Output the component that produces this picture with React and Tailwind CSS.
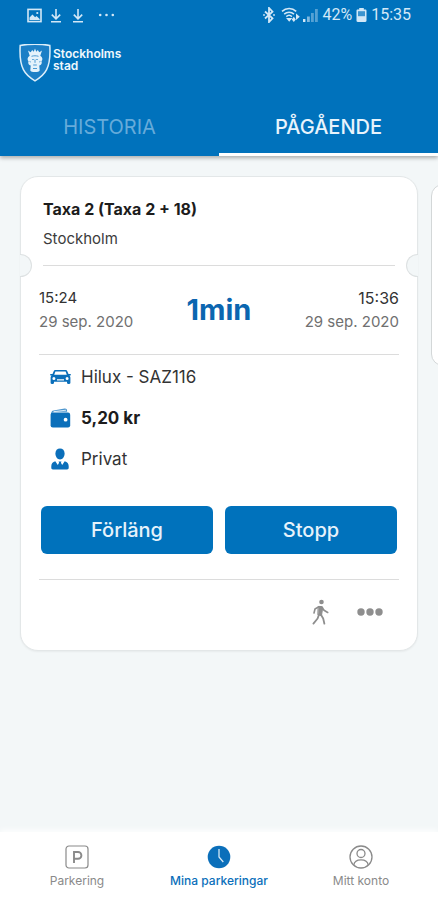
import { useState } from "react";
import clsx from "clsx";

const StatusBar = () => (
    <div className="flex h-[30px] items-center justify-between px-[27px] text-[#d3e8f7]">
        <div className="flex items-center">
            <svg className="h-[15px] w-[15px]" viewBox="0 0 15 15" fill="none" stroke="currentColor" strokeWidth="1.6">
                <rect x="1" y="1.4" width="13" height="12.2" />
                <path d="M2.5 12V9.5l3-3 2.6 2.7 1.4-1.2 3.2 3v1z" fill="currentColor" stroke="none" />
                <circle cx="10.3" cy="5" r="1.1" fill="currentColor" stroke="none" />
            </svg>
            <DownloadArrow className="ml-2" />
            <DownloadArrow className="ml-2.5" />
            <svg className="ml-3.5 h-3 w-[17px]" viewBox="0 0 17 12" fill="currentColor">
                <circle cx="2.2" cy="6" r="1.3" />
                <circle cx="8.5" cy="6" r="1.3" />
                <circle cx="14.8" cy="6" r="1.3" />
            </svg>
        </div>
        <div className="flex items-center font-['Roboto',sans-serif] text-base leading-5">
            <svg className="h-4 w-3" viewBox="0 0 12 16" fill="none" stroke="currentColor" strokeWidth="1.8">
                <path d="M2 4.5l7.5 6.8L6 15V1l3.5 3.7L2 11.500" />
                <circle cx="1" cy="8" r=".9" fill="currentColor" stroke="none" />
                <circle cx="11" cy="8" r=".9" fill="currentColor" stroke="none" />
            </svg>
            <svg className="ml-1.5 h-4 w-5" viewBox="0 0 20 16" fill="none" stroke="currentColor" strokeWidth="1.5">
                <path d="M1 4.4C5 .6 11.2.6 15.2 4.4M3.2 7.1c2.8-2.6 7-2.6 9.8 0M5.3 9.6c1.6-1.5 4-1.5 5.6 0" />
                <path d="M6.7 11.7l1.5 1.8 1.5-1.8z" fill="currentColor" />
                <path d="M10.800 12.500l2-2.800 2 2.800-2 2.500zM15 6.500l3.800 3.200L15 13z" fill="currentColor" stroke="none" />
            </svg>
            <svg className="ml-0.5 h-4 w-[15px]" viewBox="0 0 15 16" fill="currentColor">
                <rect x="0" y="12" width="2.4" height="3" />
                <rect x="4" y="9.5" width="2.8" height="5.5" opacity=".6" />
                <rect x="8" y="6" width="2.8" height="9" opacity=".4" />
                <rect x="12" y="2" width="2.8" height="13" opacity=".4" />
            </svg>
            <span className="ml-1">42%</span>
            <svg className="ml-1 h-4 w-[11px]" viewBox="0 0 11 16" fill="currentColor">
                <path d="M3.2 1h4.6v1.6h1.5c.7 0 1.2.5 1.2 1.2v10c0 .7-.5 1.2-1.2 1.2H1.7c-.7 0-1.2-.5-1.2-1.2v-10c0-.7.5-1.2 1.2-1.2h1.5z" />
                <rect x="2" y="4.2" width="7" height="5" fill="#3c94cf" />
            </svg>
            <span className="ml-1">15:35</span>
        </div>
    </div>
);

const DownloadArrow = ({ className }) => (
    <svg className={clsx("h-[15px] w-3", className)} viewBox="0 0 12 15" fill="none" stroke="currentColor" strokeWidth="1.6">
        <path d="M6 1v9.6M1.8 6.6L6 10.8l4.2-4.2M1 13.8h10" />
    </svg>
);

const Shield = () => (
    <svg className="h-[38px] w-8" viewBox="0 0 32 38">
        <path
            d="M1.2 1.4c9.5-1.6 20-1.6 29.6 0 .6 9.6-.2 18.3-3.2 24.3C25.1 30.6 21 34 16 36.8 11 34 6.9 30.6 4.4 25.7 1.4 19.7.6 11 1.2 1.4z"
            fill="#1c7fc6"
            stroke="#dceefa"
            strokeWidth="1.5"
        />
        <path
            d="M9 6.5l2.7 1.8 1.5-2.300 1.5 1.7L16 4.6l1.3 3.1L18.8 6l1.5 2.3L23 6.5l-1.7 5.2c2.4 1.2 2.7 4 1.2 5.5.8 2-.2 4-2.2 4.3l.4 5c-.5 1.5-2.3 1.5-4.7 1.5s-4.2 0-4.7-1.5l.4-5c-2-.3-3-2.3-2.2-4.3-1.5-1.500-1.2-4.3 1.2-5.5z"
            fill="#e4f2fb"
        />
        <path
            d="M12.5 12.3c2.3-.7 4.7-.7 7 0M13.2 15.5h1.6M17.2 15.5h1.6M16 15.5v3.300M14.2 21h3.600M10.6 17.5l1.2.5M21.4 17.5l-1.2.5M14 24.5h4"
            fill="none"
            stroke="#4b9ad3"
            strokeWidth="1"
        />
    </svg>
);

const CarIcon = () => (
    <svg className="h-4 w-[21px]" viewBox="0 0 21 16" fill="#0b6fba">
        <path
            fillRule="evenodd"
            d="M5.2.9h10.6c.7 0 1.1.4 1.4 1l1.3 3h1.2c.8 0 1.3.4 1.3.9s-.5.8-1.1.8h-.6c.8.7 1.1 1.4 1.1 2.5v4.7c0 .7-.4 1.1-1.1 1.1h-1.2c-.7 0-1.1-.4-1.1-1.1v-1H4v1c0 .7-.4 1.1-1.1 1.1H1.7c-.7 0-1.1-.4-1.1-1.1V9.1c0-1.1.3-1.8 1.1-2.5h-.6C.5 6.6 0 6.3 0 5.8s.5-.9 1.3-.9h1.2l1.3-3c.3-.6.7-1 1.4-1zM5.4 2.5L4.2 5.7h12.6l-1.2-3.2zM3.900 8a1.5 1.5 0 100 3 1.5 1.5 0 000-3zm13.200 0a1.5 1.5 0 100 3 1.5 1.5 0 000-3zM7 10.2v1.2h7v-1.2z"
        />
    </svg>
);

const WalletIcon = () => (
    <svg className="h-5 w-[21px]" viewBox="0 0 21 20">
        <path d="M1.2 5.2C1.3 3.5 2 2.7 3.5 2.4L14.6.6c1.5-.2 2.5.6 2.500 2v1.2H4.5" fill="#4c95cd" />
        <path d="M3.5 3.7L16 2.2" stroke="#fff" strokeWidth=".8" />
        <rect x=".6" y="4.6" width="19.6" height="14.8" rx="2.2" fill="#0b6fba" />
        <circle cx="15.6" cy="11.7" r="1.9" fill="#fff" />
    </svg>
);

const PersonIcon = () => (
    <svg className="h-[22px] w-[18px]" viewBox="0 0 18 22" fill="#0b6fba">
        <path d="M9 .6c2.8 0 4.6 2 4.6 4.9 0 3.2-2 6-4.6 6s-4.6-2.8-4.6-6C4.400 2.6 6.2.6 9 .6z" />
        <path d="M4.3 13.2L6.8 17l1.3-2.2L7.5 13.500h3l-.6 1.300 1.3 2.2 2.5-3.8c2.7.7 4 2.3 4 5v1.6c0 1-.6 1.6-1.6 1.6H1.9c-1 0-1.6-.6-1.6-1.6v-1.6c0-2.7 1.3-4.3 4-5z" />
    </svg>
);

const WalkIcon = () => (
    <svg className="h-[26px] w-[17px]" viewBox="0 0 17 26" fill="none" stroke="#8e8e8e" strokeLinecap="round" strokeLinejoin="round">
        <circle cx="9.5" cy="3" r="2.3" fill="#8e8e8e" stroke="none" />
        <path d="M6.5 7.5h3.2l.8 2.5-1 6.500-3.3-.6z" fill="#8e8e8e" strokeWidth="1" />
        <path d="M7 7.6L3 10l-1 4M10 8l2 3.300 3.700 2.200" strokeWidth="1.6" />
        <path d="M7 15.500l-1.4 4L1.4 24.6M8.8 15.500l2.4 4 1.2 5.2" strokeWidth="1.8" />
    </svg>
);

const ParkingIcon = () => (
    <svg className="h-6 w-6" viewBox="0 0 24 24" fill="none" stroke="currentColor">
        <rect x="1" y="1" width="22" height="22" rx="3" strokeWidth="1.2" />
        <path d="M9 18V7h4a3.3 3.3 0 010 6.8H9" strokeWidth="1.9" />
    </svg>
);

const ClockIcon = () => (
    <svg className="h-6 w-6" viewBox="0 0 24 24">
        <circle cx="12" cy="12" r="11.3" fill="#0b6fba" />
        <path d="M12 4v8l4.3 5" fill="none" stroke="#d5e8f6" strokeWidth="1.3" />
    </svg>
);

const AccountIcon = () => (
    <svg className="h-6 w-6" viewBox="0 0 24 24" fill="none" stroke="currentColor" strokeWidth="1.3">
        <circle cx="12" cy="12" r="11" />
        <circle cx="12" cy="8.5" r="4" />
        <path d="M4.8 20c.5-3.7 3-5.2 7.2-5.2s6.7 1.5 7.2 5.2" />
    </svg>
);

const tabs = ["HISTORIA", "PÅGÅENDE"];

const details = [
    { icon: CarIcon, text: "Hilux - SAZ116" },
    { icon: WalletIcon, text: "5,20 kr", bold: true },
    { icon: PersonIcon, text: "Privat" },
];

const navItems = [
    { label: "Parkering", icon: ParkingIcon },
    { label: "Mina parkeringar", icon: ClockIcon, active: true },
    { label: "Mitt konto", icon: AccountIcon },
];

const ParkingCard = () => (
    <article className="relative w-full shrink-0 rounded-[18px] border border-[#e3e7e8] bg-white px-[18px] pt-[22px] shadow-xs">
        {/* ticket notches */}
        <div className="absolute -left-px top-[77px] h-[23px] w-3 rounded-r-full border border-l-0 border-[#dde1e2] bg-[#f3f7f8]" />
        <div className="absolute -right-px top-[77px] h-[23px] w-3 rounded-l-full border border-r-0 border-[#dde1e2] bg-[#f3f7f8]" />

        <div className="mx-1 border-b border-[#dcdcdc] pb-4">
            <h2 className="text-base font-bold leading-5 text-[#1c1c1c]">Taxa 2 (Taxa 2 + 18)</h2>
            <p className="mt-2.5 text-[15px] leading-5 text-[#3c3c3c]">Stockholm</p>
        </div>

        <div className="flex h-[89px] items-center justify-between border-b border-[#dcdcdc]">
            <div>
                <p className="text-[15px] leading-6 text-[#333]">15:24</p>
                <p className="text-[15px] leading-6 text-[#707070]">29 sep. 2020</p>
            </div>
            <p className="text-[29px] font-bold leading-8 text-[#0b66b0]">1min</p>
            <div className="text-right">
                <p className="text-base leading-6 text-[#333]">15:36</p>
                <p className="text-[15px] leading-6 text-[#707070]">29 sep. 2020</p>
            </div>
        </div>

        <ul className="pt-px">
            {details.map(({ icon: Icon, text, bold }) => (
                <li key={text} className="flex h-[41px] items-center">
                    <span className="flex w-[42px] justify-center">
                        <Icon />
                    </span>
                    <span className={clsx("text-[17px] leading-6", bold ? "font-bold text-[#1c1c1c]" : "text-[#333]")}>{text}</span>
                </li>
            ))}
        </ul>

        <div className="mx-0.5 mt-[27px] flex gap-3">
            <button className="h-12 flex-1 rounded-md bg-[#0072bc] text-xl font-medium text-[#e6f2fb]">Förläng</button>
            <button className="h-12 flex-1 rounded-md bg-[#0072bc] text-xl font-medium text-[#e6f2fb]">Stopp</button>
        </div>

        <div className="mt-[25px] flex h-[71px] items-start justify-end gap-7 border-t border-[#dcdcdc] pr-4 pt-[19px]">
            <button aria-label="Gå till fordon">
                <WalkIcon />
            </button>
            <button aria-label="Mer">
                <svg className="h-[26px] w-[26px]" viewBox="0 0 26 26" fill="#8e8e8e">
                    <circle cx="4" cy="13" r="3.7" />
                    <circle cx="13" cy="13" r="3.7" />
                    <circle cx="22" cy="13" r="3.7" />
                </svg>
            </button>
        </div>
    </article>
);

export default function App() {
    const [activeTab, setActiveTab] = useState("PÅGÅENDE");

    return (
        <div className="flex min-h-screen flex-col bg-[#f3f7f8] font-['Inter',sans-serif]">
            <header className="relative bg-[#0072bc] shadow-[0_2px_4px_rgba(0,0,0,0.3)]">
                <StatusBar />
                <div className="flex h-[68px] items-start gap-0.5 pl-[19px] pt-3.5">
                    <Shield />
                    <div className="flex flex-col pt-1 text-[12px] font-semibold leading-3 text-[#f0f8fd]">
                        <span>Stockholms</span>
                        <span>stad</span>
                    </div>
                </div>
                <div className="flex h-[58px]">
                    {tabs.map((tab) => (
                        <button
                            key={tab}
                            onClick={() => setActiveTab(tab)}
                            className={clsx(
                                "flex-1 border-y-3 border-t-transparent text-xl",
                                activeTab === tab
                                    ? "border-b-white font-medium text-[#e8f4fc]"
                                    : "border-b-transparent text-[#66abda]"
                            )}
                        >
                            {tab}
                        </button>
                    ))}
                </div>
            </header>

            <main className="flex flex-1 items-start gap-[13px] overflow-hidden px-5 pb-8 pt-5">
                <ParkingCard />
                <div className="mt-2 h-[182px] w-full shrink-0 rounded-xl border border-[#d3d7d8] bg-white" />
            </main>

            <nav className="flex h-[68px] bg-white px-1.5 pt-[13px] shadow-[0_-2px_6px_rgba(255,255,255,0.9)]">
                {navItems.map(({ label, icon: Icon, active }) => (
                    <a
                        key={label}
                        href="#"
                        className={clsx(
                            "flex flex-1 basis-0 flex-col items-center gap-1 text-xs leading-4",
                            active ? "font-medium text-[#0b6fba]" : "text-[#8a8a8a]"
                        )}
                    >
                        <Icon />
                        <span className="whitespace-nowrap">{label}</span>
                    </a>
                ))}
            </nav>
        </div>
    );
}
